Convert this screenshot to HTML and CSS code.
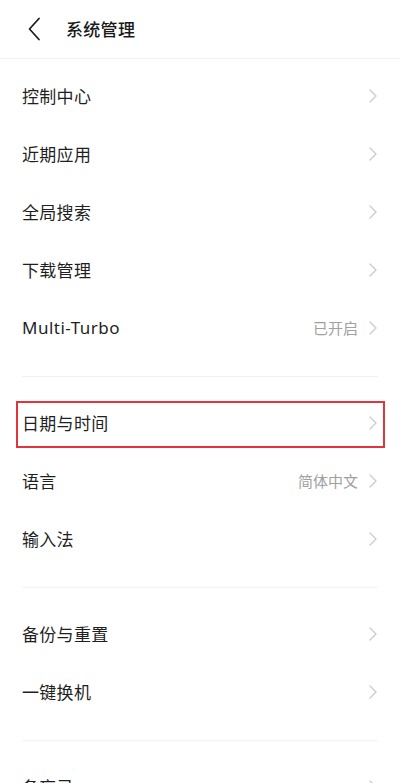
FILE: index.html
```html
<!DOCTYPE html>
<html lang="zh-CN">
<head>
<meta charset="utf-8">
<link rel="stylesheet" href="styles.css">
</head>
<body>
<div class="page">
  <header class="topbar">
    <svg class="back" width="12" height="24" viewBox="0 0 12 24"><path d="M11 1.5 L1.5 12 L11 22.5" fill="none" stroke="#1a1a1a" stroke-width="1.7" stroke-linecap="round" stroke-linejoin="round"/></svg>
    <span class="title">系统管理</span>
  </header>
  <main class="list">
    <section class="group">
      <div class="row"><span class="label">控制中心</span><span class="right"><svg class="chev" width="8" height="14" viewBox="0 0 8 14"><path d="M1 1 L7 7 L1 13" fill="none" stroke="#cccccc" stroke-width="1.4" stroke-linecap="round" stroke-linejoin="round"/></svg></span></div>
      <div class="row"><span class="label">近期应用</span><span class="right"><svg class="chev" width="8" height="14" viewBox="0 0 8 14"><path d="M1 1 L7 7 L1 13" fill="none" stroke="#cccccc" stroke-width="1.4" stroke-linecap="round" stroke-linejoin="round"/></svg></span></div>
      <div class="row"><span class="label">全局搜索</span><span class="right"><svg class="chev" width="8" height="14" viewBox="0 0 8 14"><path d="M1 1 L7 7 L1 13" fill="none" stroke="#cccccc" stroke-width="1.4" stroke-linecap="round" stroke-linejoin="round"/></svg></span></div>
      <div class="row"><span class="label">下载管理</span><span class="right"><svg class="chev" width="8" height="14" viewBox="0 0 8 14"><path d="M1 1 L7 7 L1 13" fill="none" stroke="#cccccc" stroke-width="1.4" stroke-linecap="round" stroke-linejoin="round"/></svg></span></div>
      <div class="row"><span class="label latin">Multi-Turbo</span><span class="right"><span class="value">已开启</span><svg class="chev" width="8" height="14" viewBox="0 0 8 14"><path d="M1 1 L7 7 L1 13" fill="none" stroke="#cccccc" stroke-width="1.4" stroke-linecap="round" stroke-linejoin="round"/></svg></span></div>
    </section>
    <div class="divider"></div>
    <section class="group">
      <div class="row highlighted"><span class="label">日期与时间</span><span class="right"><svg class="chev" width="8" height="14" viewBox="0 0 8 14"><path d="M1 1 L7 7 L1 13" fill="none" stroke="#cccccc" stroke-width="1.4" stroke-linecap="round" stroke-linejoin="round"/></svg></span></div>
      <div class="row"><span class="label">语言</span><span class="right"><span class="value">简体中文</span><svg class="chev" width="8" height="14" viewBox="0 0 8 14"><path d="M1 1 L7 7 L1 13" fill="none" stroke="#cccccc" stroke-width="1.4" stroke-linecap="round" stroke-linejoin="round"/></svg></span></div>
      <div class="row"><span class="label">输入法</span><span class="right"><svg class="chev" width="8" height="14" viewBox="0 0 8 14"><path d="M1 1 L7 7 L1 13" fill="none" stroke="#cccccc" stroke-width="1.4" stroke-linecap="round" stroke-linejoin="round"/></svg></span></div>
    </section>
    <div class="divider"></div>
    <section class="group">
      <div class="row"><span class="label">备份与重置</span><span class="right"><svg class="chev" width="8" height="14" viewBox="0 0 8 14"><path d="M1 1 L7 7 L1 13" fill="none" stroke="#cccccc" stroke-width="1.4" stroke-linecap="round" stroke-linejoin="round"/></svg></span></div>
      <div class="row"><span class="label">一键换机</span><span class="right"><svg class="chev" width="8" height="14" viewBox="0 0 8 14"><path d="M1 1 L7 7 L1 13" fill="none" stroke="#cccccc" stroke-width="1.4" stroke-linecap="round" stroke-linejoin="round"/></svg></span></div>
    </section>
    <div class="divider"></div>
    <section class="group">
      <div class="row"><span class="label">备忘录</span><span class="right"><svg class="chev" width="8" height="14" viewBox="0 0 8 14"><path d="M1 1 L7 7 L1 13" fill="none" stroke="#cccccc" stroke-width="1.4" stroke-linecap="round" stroke-linejoin="round"/></svg></span></div>
    </section>
  </main>
</div>
</body>
</html>
```

FILE: styles.css
```css
* { box-sizing: border-box; }
html, body {
  margin: 0;
  padding: 0;
  background: #ffffff;
}
body {
  font-family: "Noto Sans CJK SC", "Noto Sans", sans-serif;
  color: #1f1f1f;
  width: 400px;
  height: 783px;
  overflow: hidden;
}
.topbar {
  height: 59px;
  display: flex;
  align-items: center;
  padding-left: 28px;
  padding-bottom: 2px;
  border-bottom: 1px solid #f3f3f3;
}
.back {
  display: block;
  margin-top: 1px;
}
.title {
  margin-left: 26px;
  font-size: 17px;
  font-weight: 500;
  color: #1a1a1a;
  letter-spacing: 0.3px;
}
.list {
  padding-top: 9px;
}
.row {
  position: relative;
  height: 58px;
  display: flex;
  align-items: center;
  justify-content: space-between;
  padding: 0 22px 3px;
}
.label {
  font-size: 17px;
  color: #1f1f1f;
  letter-spacing: 0.3px;
}
.label.latin {
  font-family: "Noto Sans", "Noto Sans CJK SC", sans-serif;
  letter-spacing: 0.5px;
}
.right {
  display: flex;
  align-items: center;
  gap: 11px;
}
.value {
  font-size: 15px;
  color: #a0a0a0;
}
.chev {
  display: block;
  margin-right: 1px;
}
.divider {
  height: 1px;
  background: #f2f2f2;
  margin: 18px 22px;
}
.highlighted::after {
  content: "";
  position: absolute;
  left: 16px;
  right: 15px;
  top: 6px;
  height: 43px;
  border: 2px solid #e2343a;
}
```
